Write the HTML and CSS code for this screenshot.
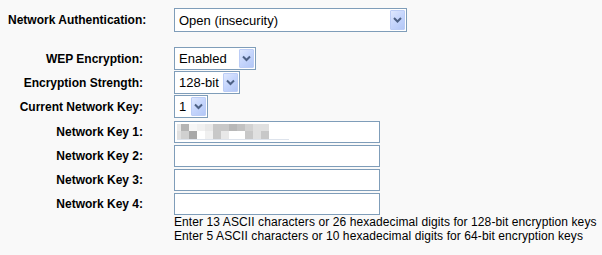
FILE: index.html
```html
<!DOCTYPE html>
<html>
<head>
<meta charset="utf-8">
<link rel="stylesheet" href="styles.css">
</head>
<body>
<div class="form">
  <div class="row row-auth">
    <div class="lbl">Network Authentication:</div>
    <div class="select w-auth"><span class="sel-text">Open (insecurity)</span><span class="arrow"><svg width="13" height="20" viewBox="0 0 13 20"><path d="M3 8 L6.5 11.5 L10 8" fill="none" stroke="#4d6185" stroke-width="2"/></svg></span></div>
  </div>
  <div class="row row-wep">
    <div class="lbl">WEP Encryption:</div>
    <div class="select w-wep"><span class="sel-text">Enabled</span><span class="arrow"><svg width="13" height="19" viewBox="0 0 13 19"><path d="M3 7.5 L6.5 11 L10 7.5" fill="none" stroke="#4d6185" stroke-width="2"/></svg></span></div>
  </div>
  <div class="row row-sel">
    <div class="lbl">Encryption Strength:</div>
    <div class="select w-str"><span class="sel-text">128-bit</span><span class="arrow"><svg width="13" height="19" viewBox="0 0 13 19"><path d="M3 7.5 L6.5 11 L10 7.5" fill="none" stroke="#4d6185" stroke-width="2"/></svg></span></div>
  </div>
  <div class="row row-sel">
    <div class="lbl">Current Network Key:</div>
    <div class="select w-key"><span class="sel-text">1</span><span class="arrow"><svg width="13" height="19" viewBox="0 0 13 19"><path d="M3 7.5 L6.5 11 L10 7.5" fill="none" stroke="#4d6185" stroke-width="2"/></svg></span></div>
  </div>
  <div class="row row-in1">
    <div class="lbl">Network Key 1:</div>
    <div class="input">
      <svg class="blur" width="112" height="17" viewBox="0 0 112 17">
        <rect x="0" y="0" width="4" height="7" fill="#e8e8e8"/>
        <rect x="4" y="0" width="8" height="7" fill="#b4b4b4"/>
        <rect x="12" y="0" width="8" height="7" fill="#f6f6f6"/>
        <rect x="20" y="0" width="8" height="7" fill="#f0f0f0"/>
        <rect x="28" y="0" width="8" height="7" fill="#e8e8e8"/>
        <rect x="36" y="0" width="16" height="7" fill="#c8c8c8"/>
        <rect x="52" y="0" width="8" height="7" fill="#b8b8b8"/>
        <rect x="60" y="0" width="8" height="7" fill="#c2c2c2"/>
        <rect x="68" y="0" width="8" height="7" fill="#d2d2d2"/>
        <rect x="76" y="0" width="16" height="7" fill="#e0e0e0"/>
        <rect x="0" y="7" width="4" height="8" fill="#e0e0e0"/>
        <rect x="4" y="7" width="8" height="8" fill="#d0d0d0"/>
        <rect x="12" y="7" width="8" height="8" fill="#a8a8a8"/>
        <rect x="20" y="7" width="8" height="8" fill="#ffffff"/>
        <rect x="28" y="7" width="8" height="8" fill="#f0f0f0"/>
        <rect x="36" y="7" width="8" height="8" fill="#c8c8c8"/>
        <rect x="44" y="7" width="8" height="8" fill="#e8e8e8"/>
        <rect x="52" y="7" width="16" height="8" fill="#ffffff"/>
        <rect x="68" y="7" width="8" height="8" fill="#c8c8c8"/>
        <rect x="76" y="7" width="8" height="8" fill="#e0e0e0"/>
        <rect x="84" y="7" width="8" height="8" fill="#c8c8c8"/>
        <rect x="0" y="15" width="112" height="1" fill="#dde3ec"/>
      </svg>
    </div>
  </div>
  <div class="row row-in">
    <div class="lbl">Network Key 2:</div>
    <div class="input"></div>
  </div>
  <div class="row row-in">
    <div class="lbl">Network Key 3:</div>
    <div class="input"></div>
  </div>
  <div class="row row-in">
    <div class="lbl">Network Key 4:</div>
    <div class="input"></div>
  </div>
  <div class="hint">
    <div>Enter 13 ASCII characters or 26 hexadecimal digits for 128-bit encryption keys</div>
    <div>Enter 5 ASCII characters or 10 hexadecimal digits for 64-bit encryption keys</div>
  </div>
</div>
</body>
</html>
```

FILE: styles.css
```css
html, body {
  margin: 0;
  padding: 0;
  background: #f9f9f9;
}
body {
  font-family: "Liberation Sans", Arial, sans-serif;
  color: #000;
}
.form {
  padding: 8px 0 0 8px;
}
.row {
  display: flex;
  align-items: center;
  column-gap: 31px;
}
.lbl {
  width: 135px;
  flex: none;
  text-align: right;
  font-weight: bold;
  font-size: 12px;
  white-space: nowrap;
}
.row-auth { height: 24px; }
.row-wep { margin-top: 15px; height: 23px; }
.row-sel { margin-top: 1px; height: 23px; }
.row-in1 { margin-top: 3px; height: 22px; }
.row-in { margin-top: 2px; height: 22px; }

.select {
  box-sizing: border-box;
  display: flex;
  align-items: stretch;
  height: 100%;
  border: 1px solid #7f9db9;
  background: #fff;
  padding: 1px;
}
.sel-text {
  flex: 1;
  padding-left: 3px;
  font-size: 13px;
  display: flex;
  align-items: center;
  white-space: nowrap;
}
.arrow {
  box-sizing: border-box;
  width: 15px;
  flex: none;
  display: flex;
  align-items: center;
  justify-content: center;
  background: linear-gradient(135deg, #dfe8fe 0%, #c5d5fc 50%, #b3c7f6 100%);
  border: 1px solid #bccdf6;
  border-radius: 1px;
}
.w-auth { width: 233px; }
.w-wep { width: 82px; }
.w-str { width: 66px; }
.w-key { width: 34px; }

.input {
  box-sizing: border-box;
  width: 206px;
  height: 100%;
  border: 1px solid #7f9db9;
  background: #fff;
  padding: 2px 0 0 2px;
}
.blur {
  display: block;
}
.hint {
  margin-left: 166px;
  font-size: 12px;
  line-height: 14px;
  letter-spacing: 0.09px;
  white-space: nowrap;
}
```
